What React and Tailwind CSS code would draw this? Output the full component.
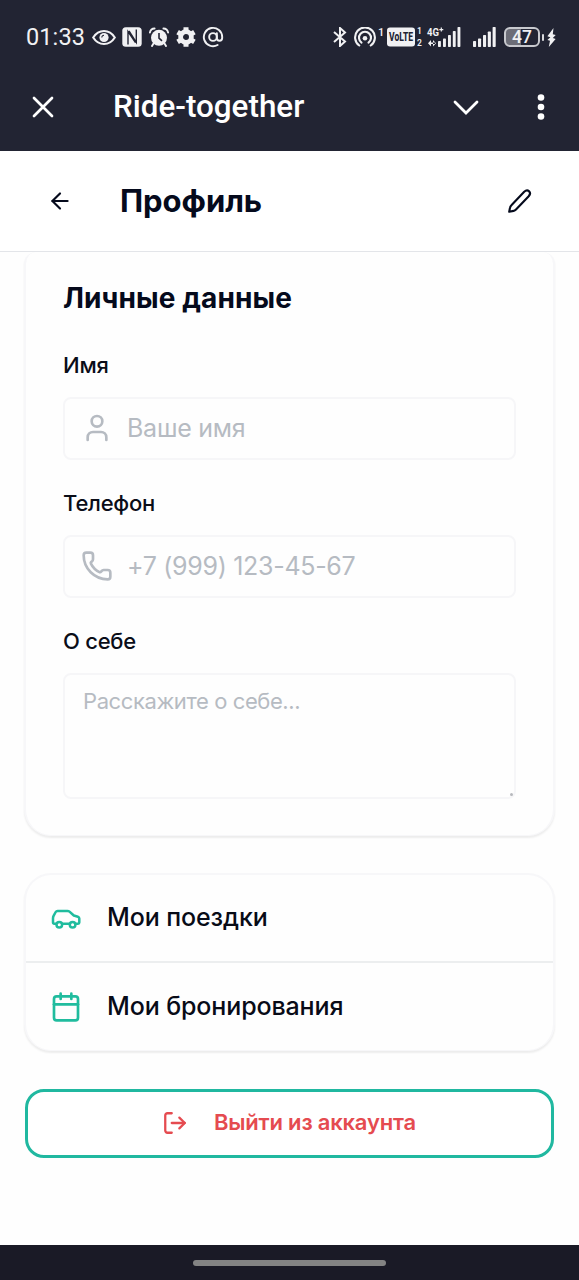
import React from "react";
import { ArrowLeft, Calendar, LogOut, Phone, User } from "lucide-react";

function EyeGlyph() {
  return (
    <svg className="ml-[7px] h-[17px] w-[24px] shrink-0" viewBox="0 0 24 17" fill="none">
      <path d="M1.2 8.5C4 4 7.700 2 12 2s8 2 10.800 6.500C20 13 16.300 15 12 15S4 13 1.200 8.500Z" stroke="#f1f1f3" strokeWidth="2.100" />
      <circle cx="12" cy="8.500" r="4.600" fill="#f1f1f3" />
      <path d="M9.800 8.500a2.200 2.200 0 0 1 2.200-2.200" stroke="#222433" strokeWidth="1.100" />
    </svg>
  );
}

function NfcGlyph() {
  return (
    <svg className="ml-[6px] h-[20px] w-[20px] shrink-0" viewBox="0 0 20 20" fill="none">
      <rect x=".3" y=".3" width="19.400" height="19.400" rx="3.500" fill="#f1f1f3" />
      <path d="M6 17.500V4.500l7.500 11.200M14.300 2.500v12.800L7 4" stroke="#222433" strokeWidth="1.400" />
    </svg>
  );
}

function AlarmGlyph() {
  return (
    <svg className="ml-[7px] h-[20px] w-[20px] shrink-0" viewBox="0 0 20 20" fill="none">
      <circle cx="10" cy="10.800" r="8" fill="#f1f1f3" />
      <path d="M.9 5.500a5 5 0 0 1 4.700-4M19.100 5.500a5 5 0 0 0-4.700-4M4.500 16.500 3 19M15.500 16.500 17 19" stroke="#f1f1f3" strokeWidth="1.900" strokeLinecap="round" />
      <path d="M10 6v5.200l3 2.600" stroke="#222433" strokeWidth="1.600" />
    </svg>
  );
}

function GearGlyph() {
  return (
    <svg className="ml-[7px] h-[20px] w-[20px] shrink-0" viewBox="0 0 20 20" fill="none">
      <circle cx="10" cy="10" r="5.400" stroke="#f1f1f3" strokeWidth="4.800" />
      <path d="M10 .3v4M10 15.700v4M1.600 5.150l3.400 2M15 12.850l3.400 2M1.600 14.850l3.400-2M15 7.150l3.400-2" stroke="#f1f1f3" strokeWidth="5" />
    </svg>
  );
}

function AtGlyph() {
  return (
    <svg className="ml-[6px] h-[22px] w-[22px] shrink-0" viewBox="0 0 24 24" fill="none" stroke="#f1f1f3" strokeWidth="2.100" strokeLinecap="round">
      <circle cx="12" cy="12" r="4.200" />
      <path d="M16.200 8v5.200a2.900 2.900 0 0 0 5.800 0V12a10 10 0 1 0-5 8.700" />
    </svg>
  );
}

function BluetoothGlyph() {
  return (
    <svg className="h-[20px] w-[14px] shrink-0" viewBox="0 0 14 20" fill="none" stroke="#f1f1f3" strokeWidth="2">
      <path d="M1 5l11 9.600L7 19V1l5 4.400L1 15" />
    </svg>
  );
}

function HotspotGlyph() {
  return (
    <svg className="ml-[7px] h-[20px] w-[22px] shrink-0" viewBox="0 0 22 20" fill="none" stroke="#f1f1f3" strokeWidth="2.100" strokeLinecap="round">
      <path d="M5.300 18.500a9.900 9.900 0 1 1 11.400 0" />
      <path d="M7.500 15.600a6 6 0 1 1 7 0" />
      <circle cx="11" cy="11.300" r="2.300" fill="#f1f1f3" stroke="none" />
    </svg>
  );
}

function SignalBars({ className }) {
  return (
    <svg className={className} viewBox="0 0 23 20" fill="#f1f1f3">
      <rect x="0" y="14" width="3.100" height="6" rx=".7" />
      <rect x="5" y="11.500" width="3.100" height="8.500" rx=".7" />
      <rect x="10" y="8" width="3.100" height="12" rx=".7" />
      <rect x="14.800" y="4.500" width="3.100" height="15.500" rx=".7" />
      <rect x="19.600" y="0" width="3.100" height="20" rx=".7" />
    </svg>
  );
}

function StatusBar() {
  return (
    <div className="flex h-[74px] items-center pl-[26px] text-[#f1f1f3]">
      <span className="w-[59px] shrink-0 whitespace-nowrap pt-[2px] font-['Roboto',sans-serif] text-[23.500px] leading-none tracking-[0.1px]">01:33</span>
      <EyeGlyph />
      <NfcGlyph />
      <AlarmGlyph />
      <GearGlyph />
      <AtGlyph />
      <div className="ml-[109px] flex h-5 items-center">
        <BluetoothGlyph />
        <HotspotGlyph />
        <span className="w-[11px] shrink-0 self-start pl-[2px] font-['Roboto',sans-serif] text-[11px] leading-[11px] font-medium">1</span>
        <svg className="h-[20px] w-[28px] shrink-0 overflow-visible" viewBox="0 0 28 20" fill="#222433">
          <rect x="0" y=".5" width="28" height="19" rx="3" fill="#f1f1f3" />
          <text x="2" y="14.300" fontFamily="Roboto, sans-serif" fontSize="12" fontWeight="800" textLength="24" lengthAdjust="spacingAndGlyphs">VoLTE</text>
        </svg>
        <span className="ml-[2px] flex h-[22px] w-[6px] shrink-0 flex-col justify-between font-['Roboto',sans-serif] text-[8.500px] font-semibold">
          <span className="block leading-[10px]">1</span>
          <span className="block leading-[10px]">2</span>
        </span>
        <svg className="ml-[4px] h-[20px] w-[34px] shrink-0 overflow-visible" viewBox="0 0 34 20" fill="#f1f1f3">
          <text x="0" y="9" fontFamily="Roboto, sans-serif" fontSize="11.500" fontWeight="700" textLength="12" lengthAdjust="spacingAndGlyphs">4G</text>
          <path d="M12.300 2.600h4M14.300.6v4" stroke="#f1f1f3" strokeWidth="1.200" />
          <path d="M1 16.200l3-3.200v6.400ZM9 16.200l-3-3.200v6.400ZM2 15.400h6v1.600H2Z" />
          <rect x="11" y="14" width="2.900" height="6" rx=".7" />
          <rect x="16" y="11.500" width="2.900" height="8.500" rx=".7" />
          <rect x="21" y="8" width="2.900" height="12" rx=".7" />
          <rect x="25.800" y="4" width="2.900" height="16" rx=".7" />
          <rect x="30.500" y="0" width="2.900" height="20" rx=".7" />
        </svg>
        <SignalBars className="ml-[12px] h-[20px] w-[23px] shrink-0" />
        <span className="ml-[8px] flex h-[20px] w-[36px] shrink-0 items-center justify-center rounded-[6px] border-2 border-[#c8c9ce] bg-linear-to-r from-[#6c6d77] from-48% to-[#222433] to-48% pt-px font-['Roboto',sans-serif] text-[17.500px] leading-none font-medium">47</span>
        <span className="ml-[2px] h-[7px] w-[2px] shrink-0 rounded-full bg-[#d9d9dd]" />
        <svg className="ml-[3px] h-[19px] w-[9px] shrink-0" viewBox="0 0 9 19" fill="#f1f1f3">
          <path d="M6.500 0 .4 8.200l3 1-3 2.800 2.600.8L1.800 19l6.800-8-2.800-1L8.700 7l-2.900-.8Z" />
        </svg>
      </div>
    </div>
  );
}

function AppBar() {
  return (
    <div className="flex h-[77px] items-center pb-[12px] text-white">
      <svg className="ml-[32px] h-[22px] w-[22px] shrink-0" viewBox="0 0 22 22" fill="none" stroke="currentColor" strokeWidth="2.700" strokeLinecap="round">
        <path d="M2 2l18 18M20 2 2 20" />
      </svg>
      <h1 className="ml-[59px] w-[330px] whitespace-nowrap pt-px font-['Roboto',sans-serif] text-[31.400px] leading-none font-medium">Ride-together</h1>
      <svg className="mt-[3px] ml-[10px] h-[16px] w-[26px] shrink-0" viewBox="0 0 26 16" fill="none" stroke="currentColor" strokeWidth="2.800" strokeLinecap="round" strokeLinejoin="miter">
        <path d="M2 2l11 11L24 2" />
      </svg>
      <svg className="ml-[58px] h-[26px] w-[8px] shrink-0" viewBox="0 0 8 26" fill="currentColor">
        <circle cx="4" cy="3.500" r="3.300" />
        <circle cx="4" cy="13" r="3.300" />
        <circle cx="4" cy="22.500" r="3.300" />
      </svg>
    </div>
  );
}

function ProfileHeader() {
  return (
    <div className="flex h-[101px] shrink-0 items-center border-b border-[#e3e5e9] bg-white text-[#050a1c]">
      <ArrowLeft className="ml-[47px] h-[26px] w-[26px] shrink-0" strokeWidth={2} />
      <h2 className="mb-[2px] ml-[47px] w-[386px] whitespace-nowrap text-[31px] leading-none font-bold tracking-[-0.05px]">Профиль</h2>
      <svg className="h-[28px] w-[28px] shrink-0" viewBox="0 0 28 28" fill="none" stroke="currentColor" strokeWidth="2.100" strokeLinejoin="round">
        <path d="M18.200 4.700c1.700-1.500 3.700-1.500 4.900-.4 1.300 1.300 1.200 3.200-.4 4.900L10 22.400c-.8.800-1.500 1.200-2.500 1.500l-4.300.8.800-3.900c.2-1.100.7-1.900 1.400-2.600Z" />
      </svg>
    </div>
  );
}

function CarIcon() {
  return (
    <svg className="size-[32px] shrink-0 text-[#20bc9e]" viewBox="0 0 32 32" fill="none" stroke="currentColor" strokeWidth="2.500" strokeLinecap="round" strokeLinejoin="round">
      <path d="M6 21.800H4.200c-.7 0-1.200-.5-1.200-1.200v-4.300c0-1 .2-1.700.7-2.600l2-3.700c.4-.7 1-1.100 1.900-1.100h9.900c.8 0 1.400.2 2 .7l4.300 3.900 4.100 1.200c.9.300 1.400 1 1.400 1.900v4c0 .7-.5 1.200-1.200 1.200h-2.400M12.400 21.800h7" />
      <circle cx="9.300" cy="22.700" r="2.800" />
      <circle cx="22.600" cy="22.700" r="2.800" />
    </svg>
  );
}

function Label({ children, className }) {
  return <span className={"block h-[25px] whitespace-nowrap text-[22px] leading-[25px] font-medium tracking-[-0.25px] text-[#0a0d18] " + className}>{children}</span>;
}

function Field({ icon: Icon, children, className }) {
  return (
    <div className="mt-[19px] flex h-[63px] items-center rounded-[8px] border-2 border-[#f6f6f8] pb-px pl-[16px] text-[#b6bbc2]">
      <Icon className="h-[32px] w-[32px] shrink-0" strokeWidth={2} />
      <span className={"ml-[14px] whitespace-nowrap leading-none " + className}>{children}</span>
    </div>
  );
}

function PersonalCard() {
  return (
    <section className="mx-[24px] h-[584px] shrink-0 rounded-t-[12px] rounded-b-[27px] border-x-2 border-b border-[#f7f7f9] bg-[#fefefe] px-[37px] pt-[31px] shadow-[0_2px_2px_rgba(0,0,0,0.07)]">
      <h3 className="h-[30px] whitespace-nowrap text-[28px] leading-[30px] font-bold tracking-[0.1px] text-[#050a1c]">Личные данные</h3>
      <Label className="mt-[40px]">Имя</Label>
      <Field icon={User} className="text-[25px] tracking-[-0.25px]">Ваше имя</Field>
      <Label className="mt-[31px]">Телефон</Label>
      <Field icon={Phone} className="text-[25px] tracking-[-0.3px]">+7 (999) 123-45-67</Field>
      <Label className="mt-[31px]">О себе</Label>
      <div className="mt-[19px] flex h-[126px] flex-col justify-between rounded-[8px] border-2 border-[#f6f6f8] pt-[13px] pl-[18px] text-[#b6bbc2]">
        <span className="whitespace-nowrap text-[22px] leading-[26px] tracking-[-0.4px]">Расскажите о себе...</span>
        <span className="mr-px mb-px size-[3px] self-end rounded-full bg-[#b7b9bd]" />
      </div>
    </section>
  );
}

function MenuCard() {
  return (
    <section className="mx-[24px] mt-[37px] h-[178px] shrink-0 rounded-[27px] border-x-2 border-t-2 border-b border-[#f7f7f9] bg-[#fefefe] text-[#080b17] shadow-[0_2px_2px_rgba(0,0,0,0.07)]">
      <div className="flex h-[88px] items-center border-b-2 border-[#eceeef] pl-[24px]">
        <CarIcon />
        <span className="mb-[2px] ml-[25px] whitespace-nowrap text-[25px] leading-none font-medium tracking-[-0.1px]">Мои поездки</span>
      </div>
      <div className="flex h-[87px] items-center pl-[24px]">
        <Calendar className="size-[32px] shrink-0 text-[#20bc9e]" strokeWidth={2} />
        <span className="ml-[25px] whitespace-nowrap text-[25px] leading-none font-medium tracking-[-0.12px]">Мои бронирования</span>
      </div>
    </section>
  );
}

export default function App() {
  return (
    <main className="flex h-[1280px] w-[579px] flex-col overflow-hidden bg-[#fefefe] font-['Inter','Noto_Sans',sans-serif]">
      <header className="h-[151px] shrink-0 bg-[#222433]">
        <StatusBar />
        <AppBar />
      </header>
      <ProfileHeader />
      <PersonalCard />
      <MenuCard />
      <button className="mx-[25px] mt-[38px] flex h-[69px] shrink-0 items-center rounded-[19px] border-3 border-[#20b8a0] bg-white pb-px pl-[134px] text-[#e54b50]">
        <LogOut className="size-[26px] shrink-0" strokeWidth={2.100} />
        <span className="mb-[3px] ml-[26px] whitespace-nowrap text-[22px] leading-none font-semibold tracking-[-0.2px]">Выйти из аккаунта</span>
      </button>
      <footer className="mt-auto flex h-[35px] shrink-0 items-center justify-center bg-[#1a1a26]">
        <span className="h-[6px] w-[193px] rounded-full bg-[#838383]" />
      </footer>
    </main>
  );
}
